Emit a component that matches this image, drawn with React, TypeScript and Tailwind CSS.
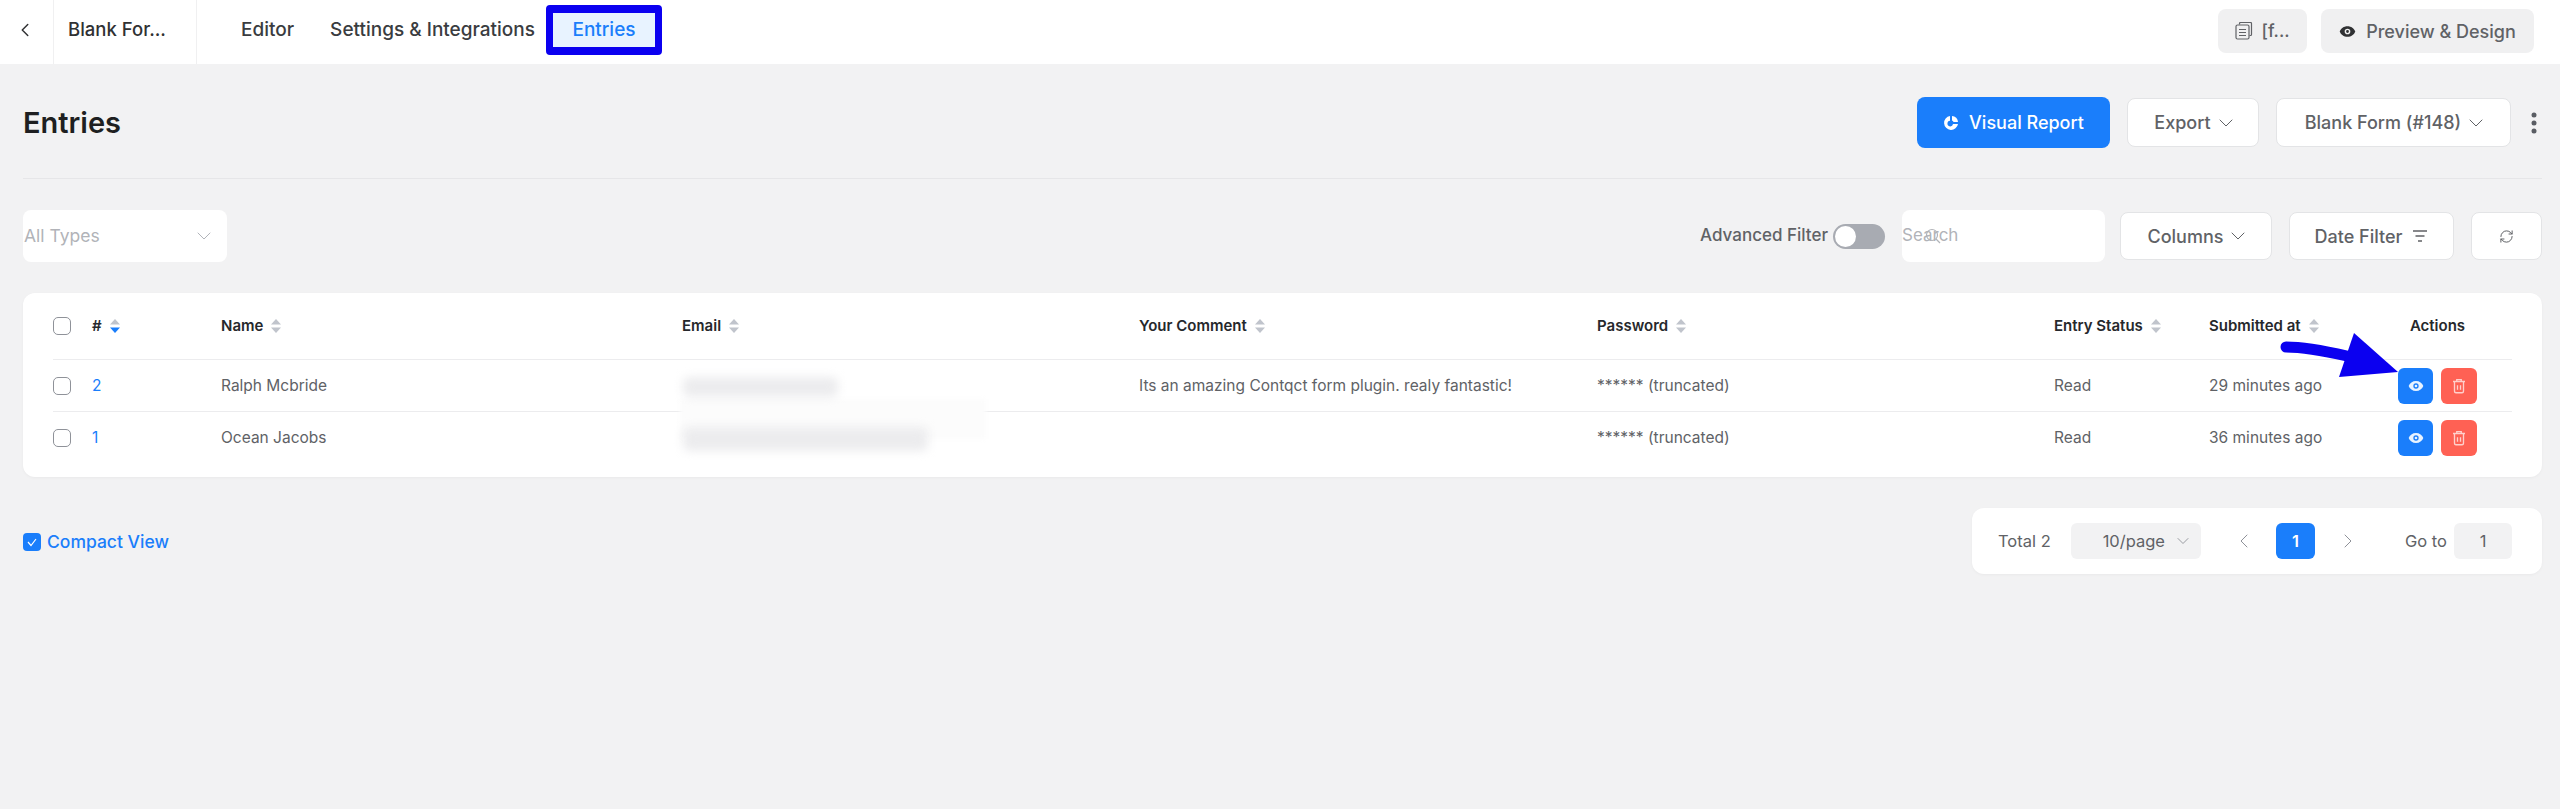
import { ChevronDown, ChevronLeft, ChevronRight, RefreshCw } from "lucide-react";

const columns = "grid grid-cols-[39px_129px_461px_457px_458px_457px_155px_155px_147px] items-center";

const SortIcon = ({ active }: { active?: boolean }) => (
  <svg width="10" height="16" viewBox="0 0 10 16" className="ml-2 shrink-0">
    <path d="M5 1 10 6.500H0Z" fill="#c0c4cc" />
    <path d="M5 15 0 9.500h10Z" fill={active ? "#1a7efb" : "#c0c4cc"} />
  </svg>
);

const Eye = ({ size, color }: { size: number; color: string }) => (
  <svg width={size} height={size} viewBox="0 0 24 24">
    <path
      fillRule="evenodd"
      d="M12 4.500C6.800 4.500 2.600 7.600 1 12c1.600 4.400 5.800 7.500 11 7.500s9.400-3.100 11-7.500c-1.600-4.400-5.800-7.500-11-7.500Zm0 3.500a4 4 0 1 1 0 8 4 4 0 0 1 0-8Zm0 2a2 2 0 1 0 0 4 2 2 0 0 0 0-4Z"
      fill={color}
    />
  </svg>
);

const Trash = () => (
  <svg width="18" height="20" viewBox="0 0 24 24" fill="none" stroke="#fff" strokeOpacity="0.7" strokeWidth="1.800">
    <path d="M4 6h16M9 6V3.500h6V6M6 6v13a2 2 0 0 0 2 2h8a2 2 0 0 0 2-2V6M10 11v6M14 11v6" />
  </svg>
);

const Caret = () => <ChevronDown size={24} strokeWidth={1} className="-ml-[7px] -mr-[6px]" />;

const Checkbox = () => <span className="block size-[18px] rounded-[5px] border border-[#8f9299] bg-white" />;

const OutlineButton = ({ children, className }: { children: React.ReactNode; className: string }) => (
  <button type="button" className={`flex items-center justify-center gap-2.5 rounded-lg border border-[#e3e4e6] bg-white text-[18px] font-medium text-[#606266] ${className}`}>
    {children}
  </button>
);

const headers = ["Name", "Email", "Your Comment", "Password", "Entry Status", "Submitted at"];

const rows = [
  { id: "2", name: "Ralph Mcbride", comment: "Its an amazing Contqct form plugin. realy fantastic!", time: "29 minutes ago" },
  { id: "1", name: "Ocean Jacobs", comment: "", time: "36 minutes ago" },
];

export default function App() {
  return (
    <div className="relative min-h-[809px] overflow-hidden bg-[#f2f2f3] font-['Inter',sans-serif] text-[#606266]">
      {/* Top bar */}
      <header className="flex h-16 items-center bg-white">
        <div className="flex h-full w-[54px] items-center justify-center border-r border-[#f0f0f1]">
          <ChevronLeft size={22} strokeWidth={1.6} color="#303133" className="-mt-1 ml-[-3px]" />
        </div>
        <div className="flex h-full w-[143px] items-center border-r border-[#f0f0f1] pb-1 pl-[14px] text-[18.5px] font-medium text-[#303133]">
          Blank For...
        </div>
        <nav className="ml-[44px] flex items-center pb-1 text-[19px] font-medium text-[#3a3c40]">
          <span>Editor</span>
          <span className="ml-[36px]">Settings &amp; Integrations</span>
          <span className="ml-[11px] flex h-[50px] w-[116px] items-center justify-center rounded-[4px] border-x-[7px] border-y-[8px] border-[#0b00f0] bg-[#e8f3ff] text-[#1a7efb]">
            Entries
          </span>
        </nav>
        <div className="ml-auto mr-[26px] flex items-center gap-[14px] pb-0.5">
          <button type="button" className="flex h-11 w-[89px] items-center justify-center gap-2 rounded-lg bg-[#f0f0f1] text-[17.500px] font-medium text-[#606266]">
            <svg width="18" height="18" viewBox="0 0 18 18" fill="none" stroke="#606266" strokeWidth="1.200">
              <path d="M4.500 2.500V1.500a1 1 0 0 1 1-1h10a1 1 0 0 1 1 1v11a1 1 0 0 1-1 1h-1" />
              <rect x="1" y="3" width="13" height="14" rx="1.500" />
              <path d="M4 7.500h7M4 10.500h7M4 13.500h7" />
            </svg>
            [f...
          </button>
          <button type="button" className="flex h-11 w-[213px] items-center justify-center gap-2.5 rounded-lg bg-[#f0f0f1] text-[18px] font-medium text-[#606266]">
            <Eye size={17} color="#303133" />
            Preview &amp; Design
          </button>
        </div>
      </header>

      <main className="pl-[23px] pr-[18px]">
        {/* Title row */}
        <div className="flex h-[115px] items-center border-b border-[#e6e6e8] pt-[3px]">
          <h1 className="text-[29px] font-semibold text-[#1e1f21]">Entries</h1>
          <button type="button" className="ml-auto flex h-[51px] w-[193px] items-center justify-center gap-2.5 rounded-lg bg-[#1a7efb] text-[18px] font-medium text-white">
            <svg width="16" height="16" viewBox="0 0 16 16">
              <path d="M7 1a7 7 0 1 0 8 8H10a2.800 2.800 0 1 1-3-3.200Z" fill="#fff" />
              <path d="M9 1a6.200 6.200 0 0 1 6 6h-4.500A2.500 2.500 0 0 0 9 5.500Z" fill="#fff" />
            </svg>
            Visual Report
          </button>
          <OutlineButton className="ml-[17px] h-[49px] w-[132px]">
            Export <Caret />
          </OutlineButton>
          <OutlineButton className="ml-[17px] h-[49px] w-[235px]">
            Blank Form (#148) <Caret />
          </OutlineButton>
          <svg width="6" height="22" viewBox="0 0 6 22" className="ml-[20px] mr-[5px]">
            <circle cx="3" cy="3" r="2.500" fill="#5a5d63" />
            <circle cx="3" cy="11" r="2.500" fill="#5a5d63" />
            <circle cx="3" cy="19" r="2.500" fill="#5a5d63" />
          </svg>
        </div>

        {/* Filters */}
        <div className="mt-[31px] flex h-[52px] items-center">
          <div className="flex h-full w-[204px] items-center justify-between rounded-lg bg-white pl-px pr-[11px] text-[17.500px] text-[#b1b3b8]">
            All Types <ChevronDown size={24} strokeWidth={0.9} color="#a8abb2" />
          </div>
          <span className="ml-auto text-[17px] font-medium text-[#606266]">Advanced Filter</span>
          <span className="ml-[5px] flex h-[25px] w-[52px] items-center rounded-full bg-[#a8abb2]">
            <span className="ml-0.5 size-[21px] rounded-full bg-white" />
          </span>
          <div className="relative ml-[17px] flex h-full w-[203px] items-center rounded-lg bg-white text-[17px] text-[#b1b3b8]">
            Search
            <svg width="16" height="16" viewBox="0 0 16 16" fill="none" stroke="#b1b3b8" strokeWidth="1.200" className="absolute left-[23px] top-[18px]">
              <circle cx="7" cy="7" r="5.500" />
              <path d="m11 11 4 4" />
            </svg>
          </div>
          <OutlineButton className="ml-[15px] h-12 w-[152px]">
            Columns <Caret />
          </OutlineButton>
          <OutlineButton className="ml-[17px] h-12 w-[165px]">
            Date Filter
            <svg width="16" height="16" viewBox="0 0 16 16" stroke="#606266" strokeWidth="1.300">
              <path d="M1 3h14M3.500 8h9M6 13h4" />
            </svg>
          </OutlineButton>
          <OutlineButton className="ml-[17px] h-12 w-[71px]">
            <RefreshCw size={15} strokeWidth={1.6} />
          </OutlineButton>
        </div>

        {/* Table */}
        <section className="relative mt-[31px] h-[184px] rounded-xl bg-white px-[30px] shadow-[0_1px_3px_rgba(0,0,0,0.04)]">
          <div className={`${columns} h-[67px] border-b border-[#ececee] text-[15px] font-semibold text-[#26282c]`}>
            <Checkbox />
            <div className="flex items-center">
              #<SortIcon active />
            </div>
            {headers.map((label) => (
              <div key={label} className="flex items-center">
                {label}
                <SortIcon />
              </div>
            ))}
            <div className="text-center">Actions</div>
          </div>
          {rows.map((row, index) => (
            <div key={row.id} className={`${columns} h-[52px] text-[15.500px] ${index === 0 ? "border-b border-[#ececee]" : ""}`}>
              <Checkbox />
              <span className="text-[#1a7efb]">{row.id}</span>
              <span>{row.name}</span>
              <span />
              <span>{row.comment}</span>
              <span>****** (truncated)</span>
              <span>Read</span>
              <span>{row.time}</span>
              <div className="flex justify-center gap-2">
                <span className="flex h-9 w-[35px] items-center justify-center rounded-md bg-[#1a7efb]">
                  <Eye size={16} color="#e8f3ff" />
                </span>
                <span className="flex h-9 w-[36px] items-center justify-center rounded-md bg-[#ff6154]">
                  <Trash />
                </span>
              </div>
            </div>
          ))}
          {/* Redacted emails */}
          <div className="absolute left-[657px] top-[106px] h-[40px] w-[306px] bg-[#fcfcfc] blur-[2px]" />
          <div className="absolute left-[660px] top-[84px] h-[20px] w-[155px] rounded-md bg-[#ececee] blur-[5px]" />
          <div className="absolute left-[660px] top-[134px] h-[24px] w-[245px] rounded-md bg-[#ececee] blur-[5px]" />
        </section>

        {/* Footer */}
        <div className="mt-[31px] flex items-start">
          <label className="mt-[21px] flex items-center gap-[6px] text-[17.500px] font-medium text-[#1a7efb]">
            <span className="flex size-[18px] items-center justify-center rounded-[4px] bg-[#1a7efb]">
              <svg width="12" height="12" viewBox="0 0 12 12" fill="none" stroke="#fff" strokeWidth="1.200">
                <path d="m2 6 3 3.500L10 3" />
              </svg>
            </span>
            Compact View
          </label>
          <div className="ml-auto flex h-[66px] w-[570px] items-center rounded-xl bg-white pl-[26px] text-[16.500px] shadow-[0_1px_3px_rgba(0,0,0,0.04)]">
            <span className="w-[73px]">Total 2</span>
            <span className="flex h-9 w-[130px] items-center justify-end gap-2 rounded-md bg-[#f2f2f3] pr-2">
              10/page <ChevronDown size={20} strokeWidth={1.1} color="#909399" />
            </span>
            <ChevronLeft size={24} strokeWidth={1} color="#8f9299" className="ml-[31px]" />
            <span className="ml-[20px] flex h-9 w-[39px] items-center justify-center rounded-md bg-[#1a7efb] font-semibold text-white">1</span>
            <ChevronRight size={24} strokeWidth={1} color="#8f9299" className="ml-[21px]" />
            <span className="ml-[45px]">Go to</span>
            <span className="ml-[7px] flex h-9 w-[58px] items-center justify-center rounded-md bg-[#f2f2f3]">1</span>
          </div>
        </div>
      </main>

      {/* Annotation arrow */}
      <svg width="130" height="60" viewBox="0 0 130 60" className="absolute left-[2275px] top-[325px]">
        <path d="M11 22C30 22 50 26 72 31" stroke="#0b00f0" strokeWidth="11" strokeLinecap="round" fill="none" />
        <path d="M79 8 123 47 64 52Z" fill="#0b00f0" />
      </svg>
    </div>
  );
}
